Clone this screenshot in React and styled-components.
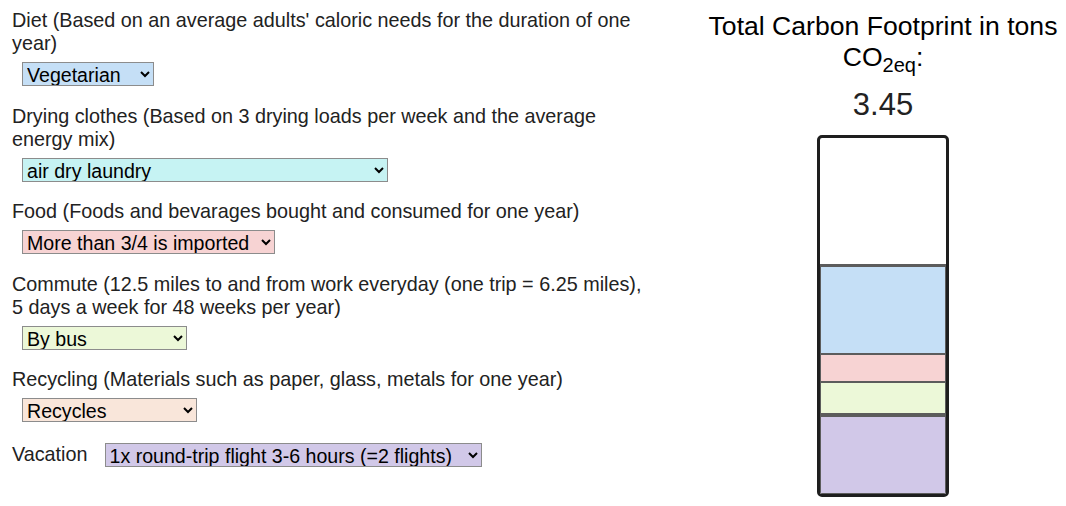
import React from 'react';
import styled, { createGlobalStyle } from 'styled-components';

const GlobalStyle = createGlobalStyle`
  body {
    margin: 0;
    background: #fff;
    font-family: "Liberation Sans", Arial, sans-serif;
    color: #222;
  }
`;

const COLORS = {
  diet: '#c5dff6',
  drying: '#c6f3f3',
  food: '#f7d3d3',
  commute: '#ecf8d8',
  recycling: '#f9e6da',
  vacation: '#d1c8e8',
};

const Page = styled.div`
  display: flex;
  padding: 9px 0 0 12px;
  width: 1066px;
  box-sizing: border-box;
`;

const Form = styled.div`
  width: 640px;
  display: flex;
  flex-direction: column;
`;

const Field = styled.div`
  display: flex;
  flex-direction: column;
  align-items: flex-start;
  margin-bottom: 18.5px;
`;

const InlineField = styled.div`
  display: flex;
  align-items: center;
  margin-top: 2px;
`;

const Label = styled.div`
  font-size: 19.8px;
  line-height: 23px;
  margin-bottom: ${(p) => (p.$inline ? 0 : 7)}px;
`;

const Select = styled.select`
  font-family: "Liberation Sans", Arial, sans-serif;
  font-size: 19.6px;
  color: #000;
  height: 24px;
  width: ${(p) => p.$w}px;
  margin-left: ${(p) => p.$ml || 10}px;
  background-color: ${(p) => p.$bg};
  border: 1px solid #8c8c8c;
  border-radius: 0;
  padding: 0;
`;

const Result = styled.div`
  width: 366px;
  margin-left: auto;
  display: flex;
  flex-direction: column;
  align-items: center;
`;

const Title = styled.div`
  margin-top: 2px;
  font-size: 26.6px;
  line-height: 31px;
  color: #000;
  text-align: center;

  sub {
    font-size: 20px;
    line-height: 0;
  }
`;

const Total = styled.div`
  font-size: 31px;
  line-height: 36px;
  margin-top: 14px;
  color: #222;
`;

const Bar = styled.div`
  margin-top: 12px;
  width: 132px;
  height: 362px;
  box-sizing: border-box;
  border: 3px solid #1e1e1e;
  border-radius: 5px;
  background: #fff;
  display: flex;
  flex-direction: column;
  justify-content: flex-end;
  overflow: hidden;
`;

const Segment = styled.div`
  background: ${(p) => p.$bg};
  border: 1px solid #5c5c5c;
  flex: none;
`;

const fields = [
  {
    key: 'diet',
    label: "Diet (Based on an average adults' caloric needs for the duration of one year)",
    options: ['Vegetarian', 'Vegan', 'Meat eater'],
    width: 132,
  },
  {
    key: 'drying',
    label: 'Drying clothes (Based on 3 drying loads per week and the average energy mix)',
    options: ['air dry laundry', 'electric dryer'],
    width: 366,
  },
  {
    key: 'food',
    label: 'Food (Foods and bevarages bought and consumed for one year)',
    options: ['More than 3/4 is imported', 'Mostly local'],
    width: 253,
  },
  {
    key: 'commute',
    label: 'Commute (12.5 miles to and from work everyday (one trip = 6.25 miles), 5 days a week for 48 weeks per year)',
    options: ['By bus', 'By car', 'By bike'],
    width: 165,
  },
  {
    key: 'recycling',
    label: 'Recycling (Materials such as paper, glass, metals for one year)',
    options: ['Recycles', 'Does not recycle'],
    width: 175,
  },
];

// tons of CO2eq per category, stacked from top to bottom
const segments = [
  { key: 'drying', value: 0 },
  { key: 'diet', value: 1.36 },
  { key: 'food', value: 0.41 },
  { key: 'commute', value: 0.48 },
  { key: 'recycling', value: 0 },
  { key: 'vacation', value: 1.2 },
];

const PX_PER_TON = 63.2;

export default function App() {
  const total = segments.reduce((s, x) => s + x.value, 0);

  return (
    <>
      <GlobalStyle />
      <Page>
        <Form>
          {fields.map((f) => (
            <Field key={f.key}>
              <Label>{f.label}</Label>
              <Select $w={f.width} $bg={COLORS[f.key]} defaultValue={f.options[0]}>
                {f.options.map((o) => (
                  <option key={o}>{o}</option>
                ))}
              </Select>
            </Field>
          ))}
          <InlineField>
            <Label $inline>Vacation</Label>
            <Select $w={377} $ml={17} $bg={COLORS.vacation}>
              <option>1x round-trip flight 3-6 hours (=2 flights)</option>
              <option>No flights</option>
            </Select>
          </InlineField>
        </Form>
        <Result>
          <Title>
            Total Carbon Footprint in tons
            <br />
            CO<sub>2eq</sub>:
          </Title>
          <Total>{total.toFixed(2)}</Total>
          <Bar>
            {segments.map((s) => (
              <Segment
                key={s.key}
                $bg={COLORS[s.key]}
                style={{ height: Math.round(s.value * PX_PER_TON) }}
              />
            ))}
          </Bar>
        </Result>
      </Page>
    </>
  );
}
